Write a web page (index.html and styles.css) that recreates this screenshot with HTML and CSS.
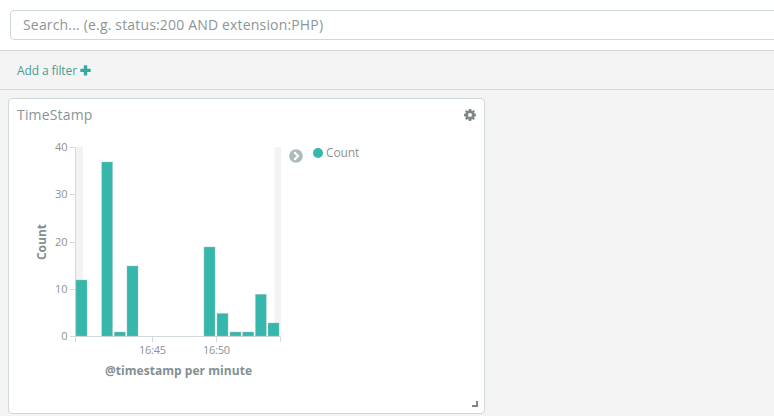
FILE: index.html
```html
<!DOCTYPE html>
<html lang="en">
<head>
<meta charset="utf-8">
<title>Dashboard</title>
<link rel="stylesheet" href="styles.css">
</head>
<body>
<header class="query-bar">
  <input class="query-input" type="text" aria-label="Search" placeholder="Search... (e.g. status:200 AND extension:PHP)">
</header>
<nav class="filter-bar">
  <a class="add-filter">Add a filter
    <svg width="11" height="11" viewBox="0 0 11 11"><path d="M4.3 0.3h2.4q.5 0 .5.5v3h3q.5 0 .5.5v2.1q0 .5-.5.5h-3v3q0 .5-.5.5H4.3q-.5 0-.5-.5v-3h-3q-.5 0-.5-.5V4.300q0-.5.5-.5h3v-3q0-.5.5-.5z"/></svg>
  </a>
</nav>
<main class="dashboard">
  <section class="panel">
    <div class="panel-heading">
      <h2 class="panel-title">TimeStamp</h2>
      <svg class="gear" width="12" height="12" viewBox="0 0 12 12"><path fill-rule="evenodd" d="M4.800 0h2.400l.25 1.600.8.350L9.600 1.100l1.300 1.300-.85 1.350.35.800L12 4.800v2.400l-1.600.25-.35.800.85 1.350-1.300 1.300-1.350-.85-.8.350L7.200 12H4.800l-.250-1.600-.800-.350-1.350.85-1.300-1.300.85-1.350-.350-.800L0 7.200V4.800l1.600-.25.350-.800L1.100 2.400l1.300-1.300 1.350.85.800-.350zM6 4a2 2 0 1 0 0 4a2 2 0 0 0 0-4z"/></svg>
    </div>
    <div class="visualization">
      <svg class="chart" width="273" height="250" viewBox="9 133 273 250">
        <path class="endzone" d="M76 147h7v189h-7zM274.500 147h6.500v189h-6.500z"/>
        <path class="axis" d="M70 147.500h5.500V342M70 194.500h5.500M70 242.500h5.500M70 289.500h5.500M70 336.500h210.500V342M152.500 337v5M216.500 337v5"/>
        <g class="bars">
          <rect x="76" y="280" width="11" height="56"/>
          <rect x="101.800" y="162" width="10.700" height="174"/>
          <rect x="114.300" y="332" width="11" height="4"/>
          <rect x="127" y="266" width="11" height="70"/>
          <rect x="204" y="247" width="11" height="89"/>
          <rect x="217" y="313.500" width="11" height="22.500"/>
          <rect x="230" y="332" width="11" height="4"/>
          <rect x="242.700" y="332" width="11" height="4"/>
          <rect x="255.500" y="294.300" width="10.700" height="41.700"/>
          <rect x="268" y="323" width="11" height="13"/>
        </g>
        <g class="ticks" text-anchor="end">
          <text x="67.500" y="151">40</text><text x="67.500" y="198">30</text><text x="67.500" y="246">20</text><text x="67.500" y="293">10</text><text x="67.500" y="340">0</text>
        </g>
        <g class="ticks" text-anchor="middle">
          <text x="152.500" y="354" textLength="27">16:45</text><text x="216.500" y="354" textLength="27">16:50</text>
        </g>
        <text class="axis-title" x="105" y="375" textLength="147">@timestamp per minute</text>
        <text class="axis-title" transform="translate(46 260) rotate(-90)" textLength="36">Count</text>
      </svg>
      <div class="legend">
        <svg class="toggle" width="14" height="14" viewBox="0 0 14 14"><circle cx="7" cy="7" r="6.800"/><path d="M5.300 3.300L9 7l-3.700 3.700"/></svg>
        <span class="dot"></span>
        <span class="legend-label">Count</span>
      </div>
    </div>
    <svg class="resize" width="6" height="6" viewBox="0 0 6 6"><path d="M4 0h2v6H0V4h4z"/></svg>
  </section>
</main>
</body>
</html>
```
FILE: styles.css
```css
* { box-sizing: border-box; }
body {
  margin: 0;
  height: 416px;
  overflow: hidden;
  background: #f4f4f4;
  color: #8a9494;
  font-family: "Open Sans", sans-serif;
}
.query-bar {
  height: 51px;
  padding: 10px 0 0 10px;
  overflow: hidden;
  background: #fff;
  border-bottom: 1px solid #d2d8d8;
}
.query-input {
  display: block;
  width: 780px;
  height: 30px;
  padding: 0 12px 2px;
  border: 1px solid #ced8d8;
  border-radius: 4px;
  background: #fff;
  font: 14px "Open Sans", sans-serif;
  letter-spacing: 0.17px;
}
.query-input::placeholder { color: #8c9696; opacity: 1; }
.filter-bar {
  display: flex;
  align-items: center;
  height: 39px;
  padding-left: 17px;
  border-bottom: 1px solid #d2d8d8;
}
.add-filter {
  display: flex;
  align-items: center;
  gap: 3px;
  color: #459e96;
  font-size: 12px;
  letter-spacing: -0.1px;
}
.add-filter svg { fill: #36aaa1; }
.dashboard { padding: 8px; }
.panel {
  display: flex;
  flex-direction: column;
  width: 477px;
  height: 316px;
  background: #fff;
  border: 1px solid #d0dada;
  border-radius: 4px;
}
.panel-heading {
  display: flex;
  align-items: center;
  justify-content: space-between;
  height: 32px;
  padding: 0 8px;
}
.panel-title { margin: 0; padding-bottom: 2px; font-size: 14px; font-weight: 400; letter-spacing: 0.17px; }
.gear { fill: #7d8888; }
.visualization { display: flex; flex: 1; margin-top: 2px; }
.chart { display: block; }
.endzone { fill: #f3f3f3; }
.axis { fill: none; stroke: #d3dada; }
.bars { fill: #36b7ab; stroke: #9ebbb7; stroke-width: 0.4; }
.ticks { fill: #8a9494; font-size: 11px; }
.axis-title { fill: #849090; font-size: 12px; font-weight: 700; }
.legend { display: flex; height: 18px; padding-left: 7px; margin-top: 11px; }
.toggle { margin-top: 5px; fill: #adbaba; }
.toggle path { fill: none; stroke: #fff; stroke-width: 2.2; }
.dot { width: 10px; height: 10px; margin: 4px 3px 0 10px; border-radius: 50%; background: #36b7ab; }
.legend-label { font-size: 12px; line-height: 18px; letter-spacing: -0.15px; }
.resize { align-self: flex-end; margin: 0 6px 6px 0; fill: #7d8888; }
```
